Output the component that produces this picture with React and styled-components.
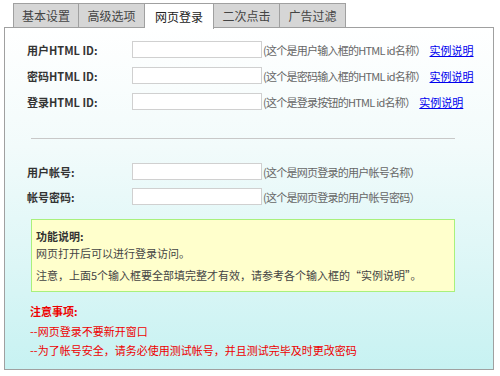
import React from "react";
import styled, { createGlobalStyle } from "styled-components";

const GlobalStyle = createGlobalStyle`
    html, body {
        margin: 0;
        padding: 0;
        background: #fff;
    }
    body {
        font-family: "Noto Sans CJK SC", "DejaVu Sans", sans-serif;
        font-size: 11px;
        color: #333;
    }
`

const WrapperStyled = styled.div`
    width: 500px;
    height: 376px;
    box-sizing: border-box;
    padding: 3px 6px 6px 4px;
    display: flex;
    flex-direction: column;
`

const TabBarStyled = styled.div`
    display: flex;
    padding-left: 9px;
    height: 25px;
    position: relative;
    z-index: 1;
    margin-bottom: -1px;
`

const TabStyled = styled.div`
    width: ${props => props.active ? 69 : 66}px;
    box-sizing: border-box;
    height: ${props => props.active ? 26 : 25}px;
    display: flex;
    align-items: center;
    justify-content: center;
    border: 1px solid #a0a0a0;
    border-left: ${props => props.first ? "1px solid #a0a0a0" : "none"};
    border-bottom: ${props => props.active ? "none" : "1px solid #a0a0a0"};
    background: ${props => props.active ? "#fff" : "#d6d6d6"};
    color: ${props => props.active ? "#222" : "#444"};
    font-size: 12px;
    padding-bottom: ${props => props.active ? 1 : 0}px;
`

const PanelStyled = styled.div`
    flex: 1;
    border: 1px solid #a0a0a0;
    background: linear-gradient(to bottom, #ffffff 0%, #f2fbfb 35%, #dcf6f6 70%, #c7f2f2 100%);
    padding: 13px 0 0 22px;
    box-sizing: border-box;
`

const RowStyled = styled.div`
    display: flex;
    align-items: center;
    height: 17px;
    margin-bottom: ${props => props.gap}px;
`

const LabelStyled = styled.span`
    width: 105px;
    font-weight: bold;
    color: #333;
`

const InputStyled = styled.input`
    width: 130px;
    height: 17px;
    box-sizing: border-box;
    border: 1px solid #d0d0d0;
    background: #fff;
    margin: 0;
    padding: 0 2px;
`

const HintStyled = styled.span`
    color: #666;
    margin-left: 1px;
    letter-spacing: -0.75px;
    white-space: nowrap;
`

const LinkStyled = styled.a`
    color: #0000ee;
    text-decoration: underline;
    margin-left: 4px;
`

const DividerStyled = styled.div`
    width: 424px;
    margin: 28px 0 24px 4px;
    border-top: 1px solid #c8c8c8;
`

const NoteBoxStyled = styled.div`
    width: 424px;
    box-sizing: border-box;
    margin: 14px 0 0 4px;
    border: 1px solid #a9f07c;
    background: #ffffcc;
    padding: 8px 4px 7px 4px;
    color: #444;
    line-height: 17px;

    .note__title {
        font-weight: bold;
        color: #333;
    }

    .note__warn {
        margin-top: 5px;
    }
`

const WarningStyled = styled.div`
    margin: 10px 0 0 3px;
    color: #ee0000;
    line-height: 19px;

    .warn__title {
        font-weight: bold;
        margin-bottom: 1px;
    }
`

const tabs = ["基本设置", "高级选项", "网页登录", "二次点击", "广告过滤"];

const htmlRows = [
    { label: "用户HTML ID:", hint: "(这个是用户输入框的HTML id名称）" },
    { label: "密码HTML ID:", hint: "(这个是密码输入框的HTML id名称）" },
    { label: "登录HTML ID:", hint: "(这个是登录按钮的HTML id名称）" },
];

const accountRows = [
    { label: "用户帐号:", hint: "(这个是网页登录的用户帐号名称）" },
    { label: "帐号密码:", hint: "(这个是网页登录的用户帐号密码）" },
];

const App = () => {
    return (<WrapperStyled>
        <GlobalStyle />
        <TabBarStyled>
            {tabs.map((tab, i) => <TabStyled key={tab} first={i === 0} active={i === 2}>{tab}</TabStyled>)}
        </TabBarStyled>
        <PanelStyled>
            {htmlRows.map((row, i) => <RowStyled key={row.label} gap={i < htmlRows.length - 1 ? 9 : 0}>
                <LabelStyled>{row.label}</LabelStyled>
                <InputStyled />
                <HintStyled>{row.hint}</HintStyled>
                <LinkStyled href="#">实例说明</LinkStyled>
            </RowStyled>)}
            <DividerStyled />
            {accountRows.map((row, i) => <RowStyled key={row.label} gap={i < accountRows.length - 1 ? 8 : 0}>
                <LabelStyled>{row.label}</LabelStyled>
                <InputStyled />
                <HintStyled>{row.hint}</HintStyled>
            </RowStyled>)}
            <NoteBoxStyled>
                <div className="note__title">功能说明:</div>
                <div>网页打开后可以进行登录访问。</div>
                <div className="note__warn">注意，上面5个输入框要全部填完整才有效，请参考各个输入框的“实例说明”。</div>
            </NoteBoxStyled>
            <WarningStyled>
                <div className="warn__title">注意事项:</div>
                <div>--网页登录不要新开窗口</div>
                <div>--为了帐号安全，请务必使用测试帐号，并且测试完毕及时更改密码</div>
            </WarningStyled>
        </PanelStyled>
    </WrapperStyled>)
}

export default App;
